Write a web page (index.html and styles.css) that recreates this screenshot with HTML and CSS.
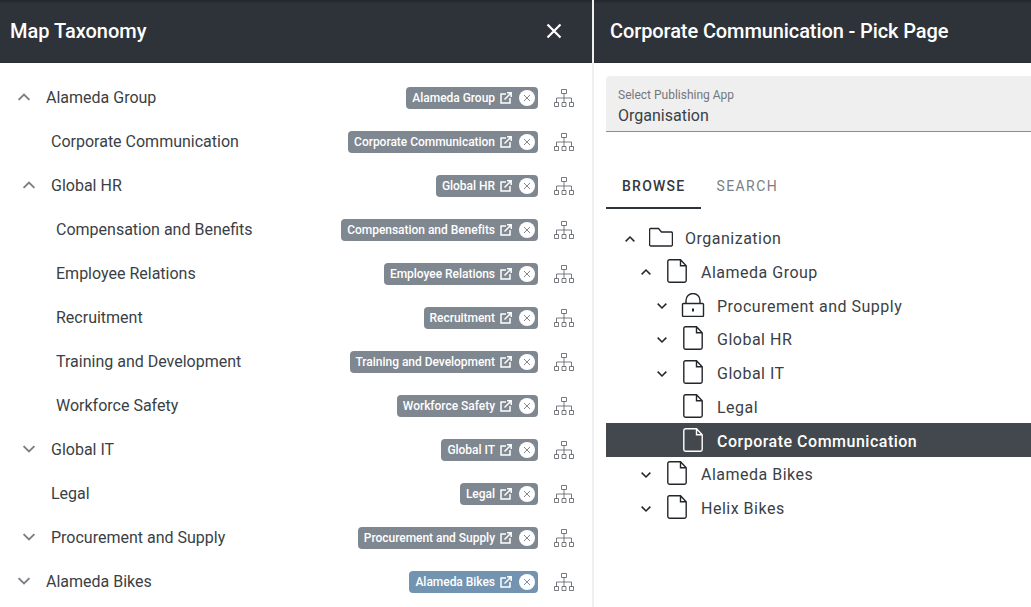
FILE: index.html
```html
<!DOCTYPE html>
<html lang="en">
<head>
    <meta charset="UTF-8">
    <title>Map Taxonomy</title>
    <link rel="stylesheet" href="styles.css">
</head>
<body>
    <svg class="defs" width="0" height="0">
        <symbol id="up" viewBox="0 0 24 24"><path d="M5.500 15.500 12 9l6.500 6.500" fill="none" stroke="currentColor" stroke-width="2.300"/></symbol>
        <symbol id="down" viewBox="0 0 24 24"><path d="M5.500 8.500 12 15l6.500-6.500" fill="none" stroke="currentColor" stroke-width="2.300"/></symbol>
        <symbol id="ext" viewBox="0 0 12 12"><path d="M6 2H1v9h9V6M4.500 7.500l6-6M7 .8h4.200V5" fill="none" stroke="currentColor" stroke-width="1.500"/></symbol>
        <symbol id="close" viewBox="0 0 16 16"><circle cx="8" cy="8" r="8" fill="#fff"/><path d="M5 5l6 6M11 5l-6 6" stroke="currentColor" fill="none"/></symbol>
        <symbol id="tree" viewBox="0 0 20 18"><path d="M7.500.5h5v4h-5zM.5 13.500h4v4h-4zM8 13.500h4v4H8zM15.500 13.500h4v4h-4zM10 4.500v9M2.500 13.500V9h15v4.500" fill="none" stroke="currentColor" stroke-width=".8"/></symbol>
        <symbol id="file" viewBox="0 0 24 24"><path d="M4.500.8h11l5.700 6v14.700a1.700 1.700 0 0 1-1.700 1.700h-15a1.700 1.700 0 0 1-1.700-1.700V2.500A1.700 1.700 0 0 1 4.500.8zM15.500.8v6h5.700" fill="none" stroke="currentColor" stroke-width="1.400"/></symbol>
        <symbol id="folder" viewBox="0 0 24 24"><path d="M1.800 3.500h7.700l3 3.500h9.700a1.200 1.200 0 0 1 1.200 1.200v11.600a1.200 1.200 0 0 1-1.200 1.200H1.800a1.200 1.200 0 0 1-1.200-1.200V4.700a1.200 1.200 0 0 1 1.200-1.200z" fill="none" stroke="currentColor" stroke-width="1.300"/></symbol>
        <symbol id="lock" viewBox="0 0 24 24"><path d="M2.500 10.500h19a1 1 0 0 1 1 1v11a1 1 0 0 1-1 1h-19a1 1 0 0 1-1-1v-11a1 1 0 0 1 1-1zM5 10.500V7.500a7 7 0 0 1 14 0v3" fill="none" stroke="currentColor" stroke-width="1.400"/><path d="M12 15.500v3" stroke="currentColor" stroke-width="2"/></symbol>
    </svg>

    <div class="app">
        <section class="pane-left">
            <header class="bar">
                <h1>Map Taxonomy</h1>
                <svg class="bar-close" viewBox="0 0 16 16"><path d="M1.500 1.500l13 13M14.500 1.500l-13 13" stroke="currentColor" stroke-width="2.200" fill="none"/></svg>
            </header>
            <div class="map-list">
                <div class="map-row lvl0"><svg class="chev"><use href="#up"/></svg><span class="map-name">Alameda Group</span><span class="chip">Alameda Group<svg class="chip-ext"><use href="#ext"/></svg><svg class="chip-x"><use href="#close"/></svg></span><svg class="tree-btn"><use href="#tree"/></svg></div>
                <div class="map-row lvl1"><span class="map-name">Corporate Communication</span><span class="chip">Corporate Communication<svg class="chip-ext"><use href="#ext"/></svg><svg class="chip-x"><use href="#close"/></svg></span><svg class="tree-btn"><use href="#tree"/></svg></div>
                <div class="map-row lvl1"><svg class="chev"><use href="#up"/></svg><span class="map-name">Global HR</span><span class="chip">Global HR<svg class="chip-ext"><use href="#ext"/></svg><svg class="chip-x"><use href="#close"/></svg></span><svg class="tree-btn"><use href="#tree"/></svg></div>
                <div class="map-row lvl2"><span class="map-name">Compensation and Benefits</span><span class="chip">Compensation and Benefits<svg class="chip-ext"><use href="#ext"/></svg><svg class="chip-x"><use href="#close"/></svg></span><svg class="tree-btn"><use href="#tree"/></svg></div>
                <div class="map-row lvl2"><span class="map-name">Employee Relations</span><span class="chip">Employee Relations<svg class="chip-ext"><use href="#ext"/></svg><svg class="chip-x"><use href="#close"/></svg></span><svg class="tree-btn"><use href="#tree"/></svg></div>
                <div class="map-row lvl2"><span class="map-name">Recruitment</span><span class="chip">Recruitment<svg class="chip-ext"><use href="#ext"/></svg><svg class="chip-x"><use href="#close"/></svg></span><svg class="tree-btn"><use href="#tree"/></svg></div>
                <div class="map-row lvl2"><span class="map-name">Training and Development</span><span class="chip">Training and Development<svg class="chip-ext"><use href="#ext"/></svg><svg class="chip-x"><use href="#close"/></svg></span><svg class="tree-btn"><use href="#tree"/></svg></div>
                <div class="map-row lvl2"><span class="map-name">Workforce Safety</span><span class="chip">Workforce Safety<svg class="chip-ext"><use href="#ext"/></svg><svg class="chip-x"><use href="#close"/></svg></span><svg class="tree-btn"><use href="#tree"/></svg></div>
                <div class="map-row lvl1"><svg class="chev"><use href="#down"/></svg><span class="map-name">Global IT</span><span class="chip">Global IT<svg class="chip-ext"><use href="#ext"/></svg><svg class="chip-x"><use href="#close"/></svg></span><svg class="tree-btn"><use href="#tree"/></svg></div>
                <div class="map-row lvl1"><span class="map-name">Legal</span><span class="chip">Legal<svg class="chip-ext"><use href="#ext"/></svg><svg class="chip-x"><use href="#close"/></svg></span><svg class="tree-btn"><use href="#tree"/></svg></div>
                <div class="map-row lvl1"><svg class="chev"><use href="#down"/></svg><span class="map-name">Procurement and Supply</span><span class="chip">Procurement and Supply<svg class="chip-ext"><use href="#ext"/></svg><svg class="chip-x"><use href="#close"/></svg></span><svg class="tree-btn"><use href="#tree"/></svg></div>
                <div class="map-row lvl0"><svg class="chev"><use href="#down"/></svg><span class="map-name">Alameda Bikes</span><span class="chip chip-blue">Alameda Bikes<svg class="chip-ext"><use href="#ext"/></svg><svg class="chip-x"><use href="#close"/></svg></span><svg class="tree-btn"><use href="#tree"/></svg></div>
            </div>
        </section>

        <section class="pane-right">
            <header class="bar">
                <h1>Corporate Communication - Pick Page</h1>
            </header>
            <div class="select-box">
                <label>Select Publishing App</label>
                <div class="select-value">Organisation</div>
            </div>
            <nav class="tabs">
                <span class="tab active">BROWSE</span>
                <span class="tab">SEARCH</span>
            </nav>
            <div class="page-tree">
                <div class="node depth0"><svg class="node-chev"><use href="#up"/></svg><svg class="node-icon"><use href="#folder"/></svg><span>Organization</span></div>
                <div class="node depth1"><svg class="node-chev"><use href="#up"/></svg><svg class="node-icon"><use href="#file"/></svg><span>Alameda Group</span></div>
                <div class="node depth2"><svg class="node-chev"><use href="#down"/></svg><svg class="node-icon"><use href="#lock"/></svg><span>Procurement and Supply</span></div>
                <div class="node depth2"><svg class="node-chev"><use href="#down"/></svg><svg class="node-icon"><use href="#file"/></svg><span>Global HR</span></div>
                <div class="node depth2"><svg class="node-chev"><use href="#down"/></svg><svg class="node-icon"><use href="#file"/></svg><span>Global IT</span></div>
                <div class="node depth2"><i class="node-chev"></i><svg class="node-icon"><use href="#file"/></svg><span>Legal</span></div>
                <div class="node depth2 selected"><i class="node-chev"></i><svg class="node-icon"><use href="#file"/></svg><span>Corporate Communication</span></div>
                <div class="node depth1"><svg class="node-chev"><use href="#down"/></svg><svg class="node-icon"><use href="#file"/></svg><span>Alameda Bikes</span></div>
                <div class="node depth1"><svg class="node-chev"><use href="#down"/></svg><svg class="node-icon"><use href="#file"/></svg><span>Helix Bikes</span></div>
            </div>
        </section>
    </div>
</body>
</html>
```

FILE: styles.css
```css
html, body {
    margin: 0;
    height: 100%;
    overflow: hidden;
}
body {
    font-family: Roboto, "Liberation Sans", sans-serif;
    color: #3a3f46;
    background: #fff;
}
.defs {
    display: block;
    height: 0;
}
.app {
    display: flex;
    height: 607px;
}
.pane-left {
    width: 592px;
    flex: none;
    border-right: 2px solid #efefef;
    overflow: hidden;
}
.pane-right {
    flex: 1;
    min-width: 0;
    overflow: hidden;
}
.bar {
    height: 63px;
    box-sizing: border-box;
    display: flex;
    align-items: center;
    justify-content: space-between;
    background: linear-gradient(#23272c, #2e333a 4px);
    color: #fff;
    padding: 0 30px 0 10px;
    border-bottom: 1px solid #2a2e34;
}
.pane-right .bar {
    padding-left: 16px;
}
.bar h1 {
    margin: 0;
    font-size: 20px;
    font-weight: 500;
    line-height: 1;
}
.pane-right .bar h1 {
    letter-spacing: -0.1px;
}
.bar-close {
    width: 16px;
    height: 16px;
}
.map-list {
    padding-top: 12px;
}
.map-row {
    height: 44px;
    display: flex;
    align-items: center;
    padding-right: 18px;
}
.map-name {
    font-size: 16px;
    margin-right: auto;
}
.lvl0 { padding-left: 46px; }
.lvl1 { padding-left: 51px; }
.lvl2 { padding-left: 56px; }
.chev {
    width: 20px;
    height: 20px;
    color: #7a7f85;
    margin-left: -32px;
    margin-right: 12px;
    flex: none;
}
.chip {
    display: flex;
    align-items: center;
    height: 22px;
    margin-top: 2px;
    padding: 0 3px 0 6px;
    border-radius: 4px;
    background: #7f8790;
    color: #fff;
    font-size: 12px;
    font-weight: 500;
    letter-spacing: -0.03px;
    white-space: nowrap;
}
.chip-blue {
    background: #7294b0;
}
.chip-ext {
    width: 12px;
    height: 12px;
    margin-left: 5px;
}
.chip-x {
    width: 16px;
    height: 16px;
    margin-left: 7px;
    color: #7f8790;
}
.chip-blue .chip-x {
    color: #7294b0;
}
.tree-btn {
    width: 20px;
    height: 18px;
    margin-left: 16px;
    margin-top: 2px;
    color: #555a60;
    flex: none;
}
.select-box {
    margin: 13px 0 0 12px;
    height: 56px;
    box-sizing: border-box;
    padding: 12px 12px 0;
    background: #efefef;
    border-bottom: 1px solid #8d8d8d;
    border-radius: 4px 0 0 0;
}
.select-box label {
    display: block;
    font-size: 12px;
    line-height: 14px;
    color: #73777c;
}
.select-value {
    font-size: 16px;
    line-height: 28px;
    color: #3a3f46;
}
.tabs {
    display: flex;
    margin: 29px 0 0 12px;
    height: 48px;
}
.tab {
    box-sizing: border-box;
    padding: 0 16px;
    line-height: 50px;
    font-size: 14px;
    font-weight: 400;
    letter-spacing: 1.4px;
    color: #7a7e83;
}
.tab.active {
    color: #33383f;
    font-weight: 500;
    letter-spacing: 1.25px;
    padding-right: 15px;
    border-bottom: 2px solid #2e333a;
}
.page-tree {
    margin: 11.25px 0 0 12px;
}
.node {
    height: 33.75px;
    display: flex;
    align-items: center;
    font-size: 16px;
    letter-spacing: 0.5px;
    color: #3a3f46;
}
.node span {
    padding-top: 3px;
}
.depth0 { padding-left: 16px; }
.depth1 { padding-left: 32px; }
.depth2 { padding-left: 48px; }
.node-chev {
    width: 16px;
    height: 16px;
    margin-top: 3px;
    flex: none;
    color: #22262b;
    margin-right: 11px;
}
.node-icon {
    width: 24px;
    height: 24px;
    flex: none;
    color: #22262b;
    margin-right: 12px;
}
.node.selected {
    background: #43474e;
    color: #fff;
    font-weight: 500;
}
.node.selected .node-icon {
    color: #fff;
}
```
